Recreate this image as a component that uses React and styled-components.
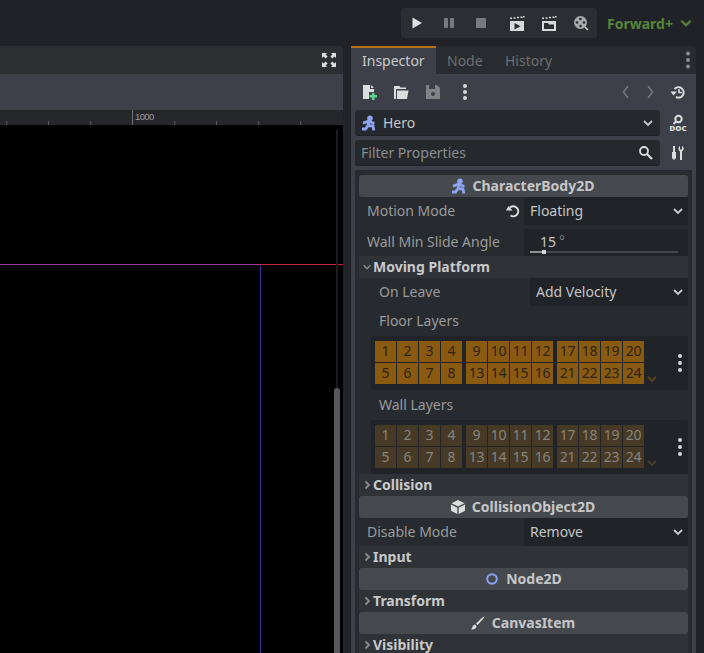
import React from "react";
import styled, { createGlobalStyle } from "styled-components";

const Global = createGlobalStyle`
  html, body { margin: 0; padding: 0; background: #202227; }
  * { box-sizing: border-box; }
  #root { width: 704px; height: 653px; overflow: hidden; }
`;

const Page = styled.div`
  width: 704px; height: 653px; overflow: hidden; background: #202227;
  font-family: "Noto Sans", sans-serif; font-size: 14px; color: #cfd0d1;
  display: flex; flex-direction: column;
`;
const TopBar = styled.div`
  height: 46px; flex: none; display: flex; align-items: flex-start; justify-content: flex-end;
  padding: 8px 10px 0 0;
`;
const RunBar = styled.div`
  width: 196px; height: 30px; background: #2b2e32; border-radius: 3px; display: flex; align-items: center;
`;
const RunSlot = styled.span`
  width: ${p => p.$w || 32}px; flex: none; display: flex; justify-content: center; align-items: center;
  margin-left: ${p => p.$ml || 0}px;
`;
const Renderer = styled.div`
  width: 97px; padding-left: 10px; height: 30px; display: flex; align-items: center; gap: 6px;
  color: #56853a; font-weight: 700; font-size: 14px; white-space: nowrap;
`;
const Body = styled.div`display: flex; flex: 1; min-height: 0; gap: 8px;`;
const Left = styled.div`width: 343px; flex: none; display: flex; flex-direction: column; min-height: 0;`;
const ViewTabs = styled.div`
  height: 28px; flex: none; background: #2c2f32; border-top-right-radius: 3px; display: flex; justify-content: flex-end; align-items: center;
  padding-right: 6px;
`;
const ViewTools = styled.div`height: 36px; flex: none; background: #3d4048;`;
const Ruler = styled.div`
  height: 15px; flex: none; background: #25272b; position: relative; overflow: hidden;
`;
const Tick = styled.span`
  position: absolute; bottom: 0; width: 1px; height: ${p => p.$major ? 15 : 4}px; background: ${p => p.$major ? "#6c6e72" : "#5a5c60"};
`;
const RulerText = styled.span`
  position: absolute; left: 135px; top: 1px; font-family: "Liberation Sans", sans-serif; font-size: 9.5px; line-height: 11px; color: #9a9b9d; letter-spacing: -0.6px;
`;
const Viewport = styled.div`flex: 1; background: #000; position: relative; overflow: hidden;`;
const AxisH = styled.div`position: absolute; left: 0; width: 260px; top: 139px; height: 1px; background: #a03a9c;`;
const AxisH2 = styled.div`position: absolute; left: 260px; right: 0; top: 139px; height: 1px; background: #c8233c;`;
const AxisV = styled.div`position: absolute; left: 260px; top: 140px; bottom: 0; width: 1px; background: #33309a;`;
const ScrollTrack = styled.div`position: absolute; right: 5px; top: 5px; bottom: 0; width: 2px; background: #1c1d1f;`;
const ScrollThumb = styled.div`position: absolute; right: 3px; top: 263px; bottom: 0; width: 6px; background: #55585a; border-radius: 3px 3px 0 0;`;

const Right = styled.div`width: 345px; flex: none; display: flex; flex-direction: column; min-height: 0;`;
const Tabs = styled.div`
  height: 28px; flex: none; background: #282b2f; display: flex; align-items: stretch; position: relative; border-top-right-radius: 3px;
`;
const Tab = styled.div`
  display: flex; align-items: center; padding: 0 ${p => p.$pad ?? 11}px 2px;
  background: ${p => p.$active ? "#3d4048" : "transparent"};
  border-top: 2px solid ${p => p.$active ? "#b5700f" : "transparent"};
  color: ${p => p.$active ? "#c8cacc" : "#6d6f72"};
  width: ${p => p.$w}px;
`;
const TabDots = styled.span`position: absolute; right: 0; top: 6px; display: flex;`;
const Panel = styled.div`flex: 1; background: #3d4048; min-height: 0; display: flex; flex-direction: column; overflow: hidden;`;
const Toolbar = styled.div`height: 36px; flex: none; display: flex; align-items: center; position: relative;`;
const ToolSlot = styled.span`
  width: ${p => p.$w || 32}px; flex: none; display: flex; justify-content: center; align-items: center;
  margin-left: ${p => p.$ml || 0}px;
`;
const FieldRow = styled.div`height: 26px; flex: none; display: flex; align-items: center; margin: 0 0 4px 4px;`;
const Field = styled.div`
  width: 305px; height: 26px; background: #25282c; border-radius: 3px; display: flex; align-items: center; padding: 0 6px; position: relative;
  color: ${p => p.$dim ? "#8b8d8f" : "#c5c6c8"}; flex: none;
  border-bottom: 1px solid #1f2125;
`;
const FieldRight = styled.span`margin-left: auto; display: flex; align-items: center; padding-right: ${p => p.$pr || 0}px;`;
const FieldName = styled.span`margin-left: 6px;`;
const SideIcon = styled.span`width: 36px; flex: none; display: flex; justify-content: center;`;

const List = styled.div`flex: 1; margin: 0 4px; background: #272a2e; padding: 5px 4px 0; overflow: hidden; display: flex; flex-direction: column;`;
const Section = styled.div`
  height: 22px; flex: none; background: #45494d; border-radius: 3px; display: flex; align-items: center; justify-content: center; gap: ${p => p.$gap || 6}px;
  font-weight: 700; color: #c5c6c8; white-space: nowrap; padding: 0 ${p => p.$pr ?? 2}px 2px 0;
  svg { margin-top: 2px; }
`;
const Row = styled.div`
  height: 28px; flex: none; display: flex; align-items: center; margin-top: ${p => p.$mt || 0}px; position: relative;
  padding-left: ${p => p.$indent ? 20 : 8}px; color: #999b9d;
`;
const Label = styled.span`flex: 1; white-space: nowrap; padding-bottom: 2px;`;
const Revert = styled.span`position: absolute; left: 146px; top: 6px; display: flex;`;
const Select = styled.div`
  width: ${p => p.$w || 164}px; height: ${p => p.$h || 28}px; flex: none; background: #202327; border-radius: 3px; color: #c5c6c8;
  display: flex; align-items: center; padding: 0 4px 2px 6px; justify-content: space-between;
  svg { margin-top: 2px; }
`;
const Slider = styled.div`
  width: 164px; height: 27px; flex: none; background: #202327; border-radius: 3px; position: relative; color: #c5c6c8; padding: 0 0 0 16px; line-height: 25px;
`;
const Deg = styled.span`color: #77797b; margin-left: 3px; position: relative; top: -1px;`;
const SliderTrack = styled.div`position: absolute; left: 6px; right: 10px; bottom: 3px; height: 2px; background: #43464a;`;
const SliderFill = styled.div`position: absolute; left: 0; top: 0; height: 2px; width: 14px; background: #8f9091;`;
const SliderGrab = styled.div`position: absolute; left: 12px; top: -1px; width: 4px; height: 4px; background: #d5d6d6;`;
const Group = styled.div`
  height: 22px; flex: none; background: #2f3337; display: flex; align-items: center; font-weight: 700; color: #c8c9ca; padding: 0 0 2px 3px; gap: 1px;
  svg { margin-top: 2px; }
`;
const SubLabel = styled.div`height: 30px; flex: none; display: flex; align-items: center; padding: 0 0 2px 20px; color: #999b9d;`;
const LayerBox = styled.div`
  height: 54px; flex: none; margin-left: 12px; background: #202327; border-radius: 3px; padding: 5px 0 0 4px; display: flex; gap: 4px; position: relative;
`;
const LayerGroup = styled.div`display: grid; grid-template-columns: repeat(4, 21px); grid-auto-rows: 21px; gap: 1px; height: 43px;`;
const Cell = styled.span`
  display: flex; align-items: center; justify-content: center; padding-bottom: 2px;
  background: ${p => p.$on ? "#8a5a10" : "#463926"};
  color: ${p => p.$on ? "#2b2416" : "#86847e"};
  letter-spacing: -0.2px;
`;
const LayerChevron = styled.span`position: absolute; left: 275px; top: 37px; display: flex;`;
const LayerDots = styled.span`position: absolute; right: 0; top: 19px; display: flex;`;

const Chevron = ({ c = "#c8c9ca", s = 12, w = 1.8 }) => (
  <svg width={s} height={s} viewBox="0 0 12 12"><path d="M2 4l4 4 4-4" fill="none" stroke={c} strokeWidth={w} /></svg>
);
const ArrowRight = () => (
  <svg width="10" height="12" viewBox="0 0 10 12"><path d="M3.500 2.500L7 6l-3.500 3.500" fill="none" stroke="#8a8c8e" strokeWidth="1.800" /></svg>
);
const Dots = ({ c = "#d6d7d8", gap = 6 }) => (
  <svg width="16" height="16" viewBox="0 0 16 16" fill={c} style={{ overflow: "visible" }}>
    <circle cx="8" cy={8 - gap} r="2" /><circle cx="8" cy="8" r="2" /><circle cx="8" cy={8 + gap} r="2" />
  </svg>
);
const Runner = () => (
  <svg width="16" height="16" viewBox="0 0 16 16" fill="none" stroke="#8da5f3" strokeWidth="2.800">
    <circle cx="9" cy="3.200" r="2.800" fill="#8da5f3" stroke="none" />
    <path d="M2 8c2.500-.2 4-1.800 6-1.800s2.500 2 5.500 2M8 6.500L7 10.500M7 10.500l5 .5 .8 4.500M7 10.500l-2.500 3.500H1" />
  </svg>
);
const Clapper = ({ children }) => (
  <svg width="16" height="16" viewBox="0 0 16 16">
    <path d="M1 2.500h2v1.500H1zM4.500 2.200h2v1.500h-2zM8 1.800h2v1.500H8zM11.500 1.400h2v1.500h-2zM14 1h1.500v1.500H14z" fill="#d8d9da" />
    <rect x="1" y="6" width="14" height="10" fill="#d8d9da" />
    {children}
  </svg>
);
const ICON = "#dcdddd";

const layers = [[1, 2, 3, 4, 5, 6, 7, 8], [9, 10, 11, 12, 13, 14, 15, 16], [17, 18, 19, 20, 21, 22, 23, 24]];
const Layers = ({ on }) => (
  <LayerBox>
    {layers.map((g, i) => (
      <LayerGroup key={i}>{g.map(n => <Cell key={n} $on={on}>{n}</Cell>)}</LayerGroup>
    ))}
    <LayerChevron><Chevron c={on ? "#5c4418" : "#4d3f28"} /></LayerChevron>
    <LayerDots><Dots gap={7} /></LayerDots>
  </LayerBox>
);
const ticks = [6, 48, 90, 174, 216, 258, 300];

export default function App() {
  return (
    <Page>
      <Global />
      <TopBar>
        <RunBar>
          <RunSlot><svg width="16" height="16" viewBox="0 0 16 16"><path d="M3.500 2.500v11l9.500-5.500z" fill="#e0e0e0" /></svg></RunSlot>
          <RunSlot><svg width="16" height="16" viewBox="0 0 16 16" fill="#77797c"><rect x="3" y="3" width="4" height="10" rx=".8" /><rect x="9" y="3" width="4" height="10" rx=".8" /></svg></RunSlot>
          <RunSlot><svg width="16" height="16" viewBox="0 0 16 16"><rect x="3" y="3" width="10" height="10" rx=".8" fill="#77797c" /></svg></RunSlot>
          <RunSlot $ml={4}><Clapper><path d="M5.500 8v6.500l6-3.200z" fill="#2b2e32" /></Clapper></RunSlot>
          <RunSlot><Clapper><path d="M3 8h4l1 1.500h5V14H3z" fill="#2b2e32" /></Clapper></RunSlot>
          <RunSlot>
            <svg width="16" height="16" viewBox="0 0 16 16">
              <circle cx="7.500" cy="7.500" r="6.500" fill="#a8aaac" />
              <g fill="#2b2e32"><circle cx="7.500" cy="4" r="1.300" /><circle cx="7.500" cy="11" r="1.300" /><circle cx="4" cy="7.500" r="1.300" /><circle cx="11" cy="7.500" r="1.300" /></g>
              <path d="M12 12l3 3" stroke="#d8d9da" strokeWidth="1.500" />
            </svg>
          </RunSlot>
        </RunBar>
        <Renderer>Forward+<Chevron c="#56853a" s={14} /></Renderer>
      </TopBar>
      <Body>
        <Left>
          <ViewTabs>
            <svg width="16" height="16" viewBox="0 0 16 16" fill="#dcdddd">
              <path d="M1 1h5L4.600 2.600l2 2-2 2-2-2L1 6zM15 1v5l-1.600-1.400-2 2-2-2 2-2L10 1zM1 15v-5l1.600 1.400 2-2 2 2-2 2L6 15zM15 15h-5l1.400-1.600-2-2 2-2 2 2L15 10z" />
            </svg>
          </ViewTabs>
          <ViewTools />
          <Ruler>
            {ticks.map(x => <Tick key={x} style={{ left: x }} />)}
            <Tick $major style={{ left: 132 }} />
            <RulerText>1000</RulerText>
          </Ruler>
          <Viewport>
            <AxisH /><AxisH2 /><AxisV />
            <ScrollTrack /><ScrollThumb />
          </Viewport>
        </Left>
        <Right>
          <Tabs>
            <Tab $active $w={85}>Inspector</Tab>
            <Tab $pad={11} $w={58}>Node</Tab>
            <Tab $pad={11}>History</Tab>
            <TabDots><Dots c="#8a8c8e" gap={6.500} /></TabDots>
          </Tabs>
          <Panel>
            <Toolbar>
              <ToolSlot $ml={2}>
                <svg width="16" height="16" viewBox="0 0 16 16">
                  <path d="M2 1h7v4h4v3H8v7H2z" fill={ICON} /><path d="M10 1l3 3h-3z" fill={ICON} />
                  <path d="M11 9h2.500v2H16v2.500h-2.500V16H11v-2.500H8.500V11H11z" fill="#5fd38d" />
                </svg>
              </ToolSlot>
              <ToolSlot>
                <svg width="16" height="16" viewBox="0 0 16 16" fill={ICON}>
                  <path d="M1 2h5.500l1 1.500H13v1.500H3v10H1z" /><path d="M4 6.500h11.500l-1.500 8.500H4z" />
                </svg>
              </ToolSlot>
              <ToolSlot>
                <svg width="16" height="16" viewBox="0 0 16 16">
                  <path d="M1 1h11l3 3v11H1z" fill="#808286" /><rect x="4" y="1" width="6" height="4" fill="#3d4048" /><circle cx="8" cy="10" r="2" fill="#3d4048" />
                </svg>
              </ToolSlot>
              <ToolSlot><Dots /></ToolSlot>
              <ToolSlot $w={24} $ml={133}><svg width="12" height="16" viewBox="0 0 12 16"><path d="M8 2L3.500 8 8 14" fill="none" stroke="#77797c" strokeWidth="1.500" /></svg></ToolSlot>
              <ToolSlot $w={24}><svg width="12" height="16" viewBox="0 0 12 16"><path d="M4 2l4.500 6L4 14" fill="none" stroke="#77797c" strokeWidth="1.500" /></svg></ToolSlot>
              <ToolSlot $w={32}>
                <svg width="16" height="16" viewBox="0 0 16 16" fill="none" stroke={ICON} strokeWidth="2">
                  <path d="M4.500 5A5.200 5.200 0 1 1 6 13" /><path d="M9 5v3.500h3" strokeWidth="1.600" /><path d="M.5 7.500h6.500L3.500 11.500z" fill={ICON} stroke="none" />
                </svg>
              </ToolSlot>
            </Toolbar>
            <FieldRow>
              <Field>
                <Runner /><FieldName>Hero</FieldName>
                <FieldRight><Chevron /></FieldRight>
              </Field>
              <SideIcon>
                <svg width="18" height="18" viewBox="0 0 18 18" fill="none" stroke={ICON} strokeWidth="2">
                  <circle cx="9.500" cy="5" r="3.200" /><path d="M7 7.500L4.500 10" />
                  <text x="9" y="17" textAnchor="middle" textLength="17" lengthAdjust="spacingAndGlyphs" fill={ICON} stroke="none" fontFamily="'Noto Sans', sans-serif" fontWeight="900" fontSize="7.500">DOC</text>
                </svg>
              </SideIcon>
            </FieldRow>
            <FieldRow>
              <Field $dim>
                Filter Properties
                <FieldRight $pr={1}>
                  <svg width="15" height="15" viewBox="0 0 15 15" fill="none" stroke={ICON} strokeWidth="1.800"><circle cx="6" cy="6" r="4" /><path d="M9 9l5 5" strokeWidth="2.200" /></svg>
                </FieldRight>
              </Field>
              <SideIcon>
                <svg width="16" height="16" viewBox="0 0 16 16" fill={ICON}>
                  <path d="M3 1h2v6h1v6l-2 2-2-2V7h1zM10 1v3l1 1 1-1V1c2 .8 2.500 4 0 5.500V15h-2V6.500C8 5 8 1.800 10 1z" />
                </svg>
              </SideIcon>
            </FieldRow>
            <List>
              <Section><Runner />CharacterBody2D</Section>
              <Row>
                <Label>Motion Mode</Label>
                <Revert>
                  <svg width="16" height="16" viewBox="0 0 16 16" fill="none" stroke={ICON} strokeWidth="2"><path d="M5 4.500a5 5 0 1 1 .5 8" /><path d="M1 7.500h6.500L3.500 3z" fill={ICON} stroke="none" /></svg>
                </Revert>
                <Select>Floating<Chevron /></Select>
              </Row>
              <Row $mt={4} style={{ height: 27 }}>
                <Label>Wall Min Slide Angle</Label>
                <Slider>15<Deg>°</Deg>
                  <SliderTrack><SliderFill /><SliderGrab /></SliderTrack>
                </Slider>
              </Row>
              <Group><Chevron c="#8a8c8e" s={10} />Moving Platform</Group>
              <Row $indent>
                <Label>On Leave</Label>
                <Select $w={158}>Add Velocity<Chevron /></Select>
              </Row>
              <SubLabel>Floor Layers</SubLabel>
              <Layers on />
              <SubLabel>Wall Layers</SubLabel>
              <Layers />
              <Group><ArrowRight />Collision</Group>
              <Section>
                <svg width="16" height="16" viewBox="0 0 16 16" fill={ICON}><path d="M8 1l6.500 3.200L8 7.500 1.500 4.200zM1 5.500l6.300 3.200V15L1 11.800zM15 5.500L8.700 8.700V15l6.300-3.200z" /></svg>
                CollisionObject2D
              </Section>
              <Row>
                <Label>Disable Mode</Label>
                <Select>Remove<Chevron /></Select>
              </Row>
              <Group><ArrowRight />Input</Group>
              <Section $gap={7} $pr={0}><svg width="14" height="14" viewBox="0 0 14 14" fill="none" stroke="#8da5f3" strokeWidth="2"><circle cx="7" cy="7" r="4.800" /></svg>Node2D</Section>
              <Group><ArrowRight />Transform</Group>
              <Section>
                <svg width="16" height="16" viewBox="0 0 16 16" fill={ICON}><path d="M14.500 1.500c.5.500-4.500 6-7 8.500L6 8.500c2.500-2.500 8-7.500 8.500-7z" /><path d="M5 9.500l1.500 1.500c0 2.500-2.500 4-5.500 3.500 1.500-1 1-4 4-5z" /></svg>
                CanvasItem
              </Section>
              <Group><ArrowRight />Visibility</Group>
            </List>
          </Panel>
        </Right>
      </Body>
    </Page>
  );
}
